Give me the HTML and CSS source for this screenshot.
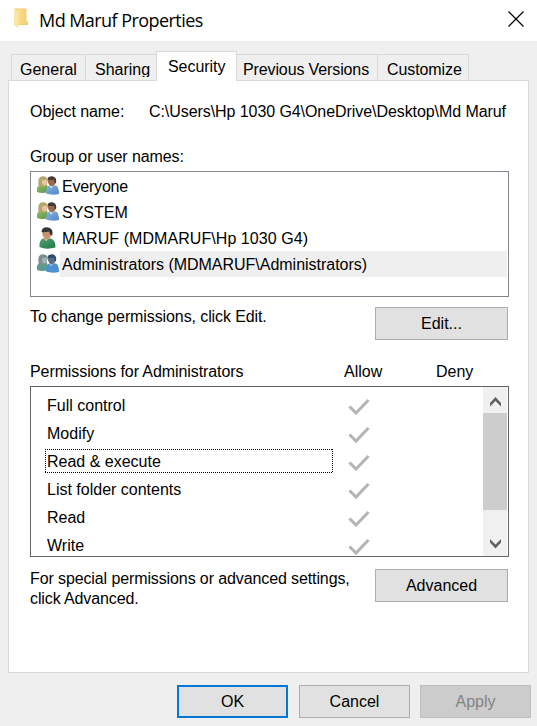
FILE: index.html
```html
<!DOCTYPE html>
<html lang="en">
<head>
<meta charset="utf-8">
<title>Md Maruf Properties</title>
<link rel="stylesheet" href="styles.css">
</head>
<body>
<svg class="defs" width="0" height="0" aria-hidden="true">
  <defs>
    <linearGradient id="green" x1="0" y1="0" x2="1" y2="1"><stop offset="0" stop-color="#91bc73"/><stop offset="1" stop-color="#5b963b"/></linearGradient>
    <linearGradient id="blue" x1="0" y1="0" x2="1" y2="1"><stop offset="0" stop-color="#86b2de"/><stop offset="1" stop-color="#5289c8"/></linearGradient>
    <linearGradient id="teal" x1="0" y1="0" x2="1" y2="1"><stop offset="0" stop-color="#4f9d72"/><stop offset="1" stop-color="#217a4a"/></linearGradient>
    <linearGradient id="gold" x1="0" y1="0" x2="1" y2="0"><stop offset="0" stop-color="#f9dc8b"/><stop offset="1" stop-color="#f4cf70"/></linearGradient>
    <symbol id="group" viewBox="0 0 22 19">
      <path class="shirt-a" d="M0 16V12Q0.500 10 3 9H10L11 12V16Q5 18 0 16Z" fill="url(#green)"/>
      <path d="M1.500 9.500Q0 0.300 6 0.300Q10.500 0.300 10.500 4.500L9.500 9.500Q5 12 1.500 9.500Z" fill="#b5a568"/>
      <path d="M5 4.500L10 3.300L9.800 7Q9 10 7 9.500Q4.500 8 5 4.500Z" fill="#e7c5a8"/>
      <path d="M9 17.500Q9 11 12 9.500H19Q22 11 22 18Q15 19.500 9 17.500Z" fill="url(#blue)"/>
      <path d="M12.500 9.500L14 12.500L16.500 9.500Z" fill="#eef4fa"/>
      <path d="M10.500 4Q11 0.800 14.500 0.800Q19 1 19 5Q18.500 9.800 14.500 10.400Q11 9 10.500 4Z" fill="#9c6846"/>
      <path d="M10.500 3.500Q11 0.300 15 0.300Q20.500 1 18.800 7.500L17.500 6.500L17 3.500Q14 4.500 10.500 3.500Z" fill="#403b3b"/>
    </symbol>
    <symbol id="group-selected" viewBox="0 0 22 19">
      <path d="M0 16V12Q0.500 10 3 9H10L11 12V16Q5 18 0 16Z" fill="#5b9b8d"/>
      <path d="M1.500 9.500Q0 0.300 6 0.300Q10.500 0.300 10.500 4.500L9.500 9.500Q5 12 1.500 9.500Z" fill="#7c9089"/>
      <path d="M5 4.500L10 3.300L9.800 7Q9 10 7 9.500Q4.500 8 5 4.500Z" fill="#a3b3bb"/>
      <path d="M9 17.500Q9 11 12 9.500H19Q22 11 22 18Q15 19.500 9 17.500Z" fill="#4d90d0"/>
      <path d="M12.500 9.500L14 12.500L16.500 9.500Z" fill="#a9cdec"/>
      <path d="M10.500 4Q11 0.800 14.500 0.800Q19 1 19 5Q18.500 9.800 14.500 10.400Q11 9 10.500 4Z" fill="#5c6f80"/>
      <path d="M10.500 3.500Q11 0.300 15 0.300Q20.500 1 18.800 7.500L17.500 6.500L17 3.500Q14 4.500 10.500 3.500Z" fill="#2f506c"/>
    </symbol>
    <symbol id="person" viewBox="0 0 17 22">
      <path d="M0.500 20Q0 13 4 11.500H12Q16.500 13 16.500 20.500Q7 23 0.500 20Z" fill="url(#teal)"/>
      <path d="M4.500 11L7 14.500L10.500 11Z" fill="#d8b08c"/>
      <path d="M3 5Q3.500 1 8 1Q13 1 13 6Q11.500 12 7.500 12.500Q3.500 11 3 5Z" fill="#c39570"/>
      <path d="M2.500 5Q2.500 0.300 8 0.300Q15 1 13.300 8.500L11.500 8L10 4.500Q6.500 5.500 2.500 5Z" fill="#373635"/>
    </symbol>
    <symbol id="check" viewBox="0 0 22 17"><path d="M1.500 8.500L8 15L20.500 2" fill="none" stroke="#b4b4b4" stroke-width="3"/></symbol>
  </defs>
</svg>
<main class="dialog">
  <header class="titlebar">
    <svg class="folder" width="15" height="21" viewBox="0 0 15 21"><path d="M1 0.500H12V13L14 14V17H2Z" fill="#eec765"/><path d="M4 1H12.500V13.500H13.500V16.500H4Z" fill="url(#gold)"/><path d="M0 0.500L4.500 3V20.500L0 17Z" fill="#fce6a5"/></svg>
    <h1 class="title">Md Maruf Properties</h1>
    <svg class="close" width="16" height="16" viewBox="0 0 16 16"><path d="M0.500 0.500L15.500 15.500M15.500 0.500L0.500 15.500" stroke="#000" stroke-width="1.200"/></svg>
  </header>
  <nav class="tabs">
    <span class="tab general">General</span><span class="tab sharing"><span class="clip">Sharing</span></span><span class="tab active">Security</span><span class="tab versions">Previous Versions</span><span class="tab customize">Customize</span>
  </nav>
  <section class="panel">
    <div class="object"><span>Object name:</span><span>C:\Users\Hp 1030 G4\OneDrive\Desktop\Md Maruf</span></div>
    <div class="group-label">Group or user names:</div>
    <ul class="users">
      <li><svg class="group-icon"><use href="#group"/></svg><span class="everyone">Everyone</span></li>
      <li><svg class="group-icon"><use href="#group"/></svg><span>SYSTEM</span></li>
      <li><svg class="person-icon"><use href="#person"/></svg><span class="maruf">MARUF (MDMARUF\Hp 1030 G4)</span></li>
      <li class="selected"><svg class="group-icon"><use href="#group-selected"/></svg><span>Administrators (MDMARUF\Administrators)</span></li>
    </ul>
    <div class="edit-row"><span>To change permissions, click Edit.</span><button>Edit...</button></div>
    <div class="perm-head"><span class="perm-title">Permissions for Administrators</span><span>Allow</span><span>Deny</span></div>
    <div class="perms">
      <ul class="perm-list">
        <li><span>Full control</span><svg><use href="#check"/></svg></li>
        <li><span>Modify</span><svg><use href="#check"/></svg></li>
        <li><span class="focused">Read &amp; execute</span><svg><use href="#check"/></svg></li>
        <li><span>List folder contents</span><svg><use href="#check"/></svg></li>
        <li><span>Read</span><svg><use href="#check"/></svg></li>
        <li><span>Write</span><svg><use href="#check"/></svg></li>
      </ul>
      <div class="scrollbar">
        <svg width="24" height="26" viewBox="0 0 24 26"><path d="M7 16V19.500L12.500 14L18 19.500V16L12.500 10Z" fill="#606060"/></svg>
        <div class="thumb"></div>
        <svg class="down" width="24" height="26" viewBox="0 0 24 26"><path d="M7 9V12.500L12.500 18.500L18 12.500V9L12.500 14.500Z" fill="#606060"/></svg>
      </div>
    </div>
    <div class="advanced-row"><span>For special permissions or advanced settings,<br>click Advanced.</span><button>Advanced</button></div>
  </section>
  <footer class="actions"><button class="default">OK</button><button>Cancel</button><button disabled>Apply</button></footer>
</main>
</body>
</html>
```

FILE: styles.css
```css
* { box-sizing: border-box; }
body { margin: 0; background: #efefef; color: #000; font: 16px/20px "Liberation Sans", Arial, sans-serif; }
.defs { display: block; height: 0; }
ul { list-style: none; margin: 0; padding: 0; }
svg { display: block; flex: none; }
span { white-space: nowrap; }
.dialog { width: 537px; height: 726px; overflow: hidden; }
.titlebar { height: 41px; background: #fff; display: flex; align-items: flex-start; padding: 8px 13px 0 14px; }
.title { margin: 0 auto 0 10px; font: 400 18px/24px "Open Sans", sans-serif; white-space: nowrap; letter-spacing: -.56px; }
.close { margin-top: 3px; }
.tabs { height: 39px; padding: 10px 0 0 11px; display: flex; align-items: flex-end; }
.tab { height: 26px; border: 1px solid #d9d9d9; border-bottom: 0; border-right: 0; padding: 5px 0 0 8px; }
.general { width: 74px; }
.sharing { width: 71px; padding-left: 9px; }
.clip { display: block; height: 17px; overflow: hidden; }
.active { width: 81px; height: 30px; margin-bottom: -1px; padding: 5px 0 0 11px; background: #fff; border-right: 1px solid #d9d9d9; position: relative; letter-spacing: -.05px; }
.versions { width: 140px; border-left: 0; padding-left: 6px; letter-spacing: -.12px; }
.customize { width: 92px; border-right: 1px solid #d9d9d9; padding-left: 9px; letter-spacing: -.1px; }
.panel { width: 521px; height: 593px; margin-left: 8px; padding: 21px 19px 0 21px; background: #fff; border: 1px solid #d9d9d9; }
.object { display: grid; grid-template-columns: 119px 1fr; height: 45px; letter-spacing: -.07px; }
.group-label { height: 24px; letter-spacing: -.09px; }
.users { width: 479px; height: 126px; border: 1px solid #828790; padding: 1px; }
.users li { display: flex; align-items: center; height: 26px; padding-left: 4px; }
.users span { height: 26px; line-height: 27px; padding-left: 3px; flex: 1; }
.users .everyone { letter-spacing: -.2px; }
.users .maruf { letter-spacing: .06px; }
.group-icon { width: 22px; height: 19px; margin: 0 0 1px 1px; }
.person-icon { width: 17px; height: 22px; margin: 0 3px; }
.users .selected span { background: #efefef; margin-left: 1px; padding-left: 2px; letter-spacing: -.02px; }
.edit-row { display: flex; justify-content: space-between; width: 478px; height: 65px; padding-top: 10px; }
.edit-row > span { letter-spacing: -.1px; }
button { width: 133px; height: 33px; border: 1px solid #adadad; background: #e1e1e1; color: #000; padding: 0; font: inherit; border-radius: 0; }
.perm-head { display: grid; grid-template-columns: 314px 92px auto; height: 24px; }
.perm-title { letter-spacing: -.09px; }
.perms { display: flex; justify-content: space-between; width: 479px; height: 171px; border: 1px solid #646464; overflow: hidden; padding-right: 1px; }
.perm-list { padding-top: 5px; }
.perm-list li { display: flex; height: 28px; padding-left: 14px; align-items: flex-start; }
.perm-list span { width: 288px; height: 25px; padding: 4px 0 0 2px; }
.perm-list svg { width: 22px; height: 17px; margin: 6px 0 0 15px; }
.perm-list .focused { margin-top: 1px; padding-top: 3px; height: 24px; background: repeating-linear-gradient(90deg,#000 0 1px,transparent 1px 2px) top/100% 1px no-repeat, repeating-linear-gradient(90deg,#000 0 1px,transparent 1px 2px) bottom/100% 1px no-repeat, repeating-linear-gradient(#000 0 1px,transparent 1px 2px) left/1px 100% no-repeat, repeating-linear-gradient(#000 0 1px,transparent 1px 2px) right/1px 100% no-repeat; }
.scrollbar { width: 24px; height: 169px; background: #f0f0f0; display: flex; flex-direction: column; }
.thumb { height: 97px; background: #cdcdcd; }
.down { margin-top: auto; }
.advanced-row { display: flex; justify-content: space-between; width: 478px; padding-top: 12px; }
.advanced-row > span { letter-spacing: -.11px; }
.actions { display: flex; justify-content: flex-end; gap: 10px; padding: 12px 6px 0 0; }
.actions button { width: 111px; }
.actions .default { border: 2px solid #0078d7; margin-right: 1px; }
.actions button:disabled { background: #ccc; border-color: #bfbfbf; color: #838383; }
```
